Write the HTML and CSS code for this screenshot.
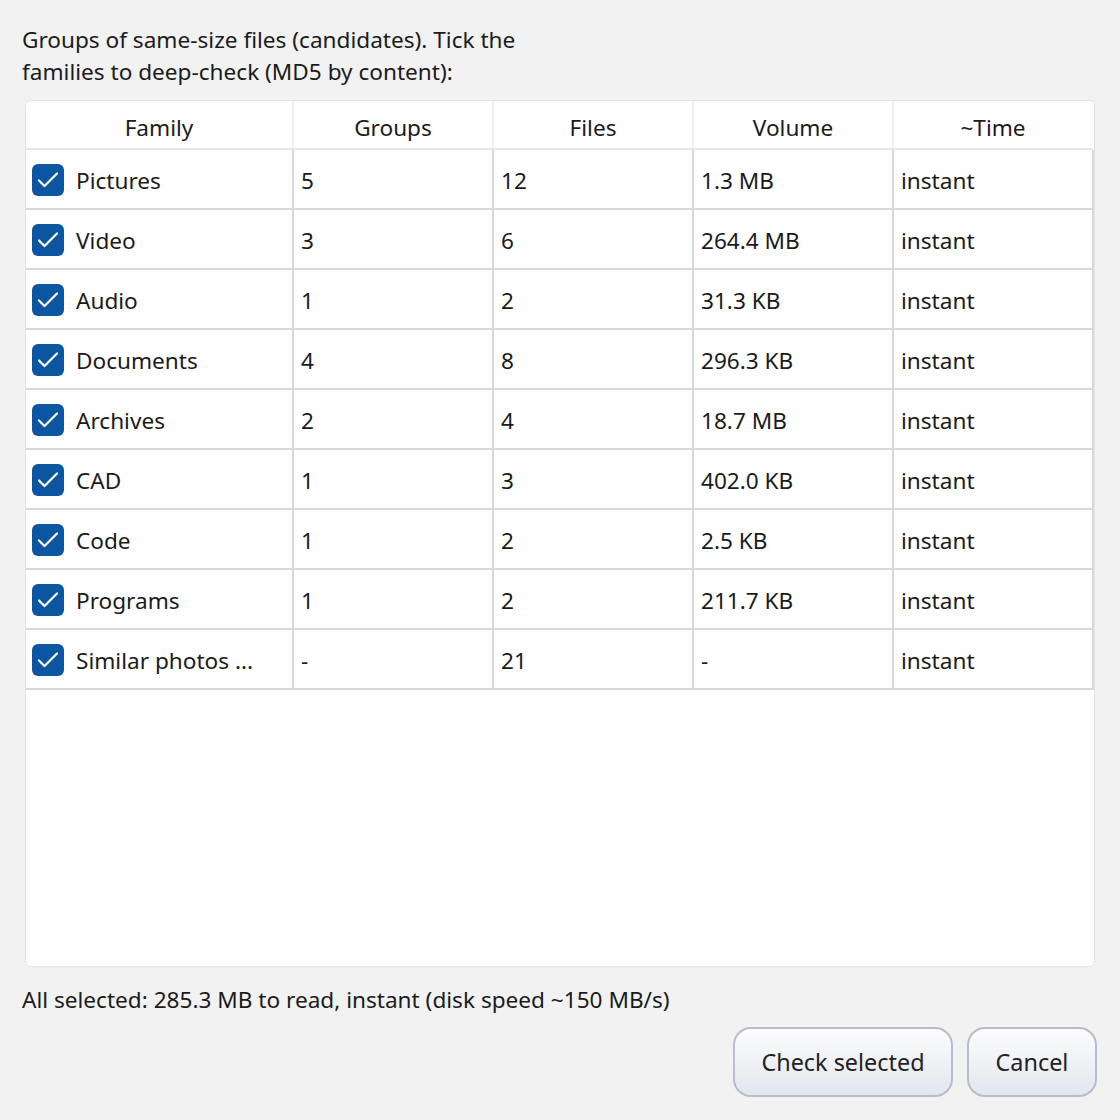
FILE: index.html
```html
<!DOCTYPE html>
<html lang="en">
<head>
    <meta charset="UTF-8">
    <title>Deep check</title>
    <link rel="stylesheet" href="styles.css">
</head>
<body>
    <div class="dialog">
        <p class="intro">Groups of same-size files (candidates). Tick the<br>families to deep-check (MD5 by content):</p>

        <div class="table-frame">
            <table class="families">
                <thead>
                    <tr>
                        <th class="col-family">Family</th>
                        <th>Groups</th>
                        <th>Files</th>
                        <th>Volume</th>
                        <th>~Time</th>
                    </tr>
                </thead>
                <tbody id="rows"></tbody>
            </table>
        </div>

        <p class="status">All selected: 285.3 MB to read, instant (disk speed ~150 MB/s)</p>

        <div class="buttons">
            <button class="btn btn-wide">Check selected</button>
            <button class="btn">Cancel</button>
        </div>
    </div>

    <script>
        const families = [
            ['Pictures', '5', '12', '1.3 MB'],
            ['Video', '3', '6', '264.4 MB'],
            ['Audio', '1', '2', '31.3 KB'],
            ['Documents', '4', '8', '296.3 KB'],
            ['Archives', '2', '4', '18.7 MB'],
            ['CAD', '1', '3', '402.0 KB'],
            ['Code', '1', '2', '2.5 KB'],
            ['Programs', '1', '2', '211.7 KB'],
            ['Similar photos ...', '-', '21', '-']
        ];

        const check = '<svg class="tick" viewBox="0 0 32 32"><polyline points="7,16.5 12.5,22 25,9.5" /></svg>';
        const tbody = document.getElementById('rows');

        families.forEach(function (f) {
            const tr = document.createElement('tr');
            tr.innerHTML =
                '<td class="col-family"><span class="box">' + check + '</span>' + f[0] + '</td>' +
                '<td>' + f[1] + '</td>' +
                '<td>' + f[2] + '</td>' +
                '<td>' + f[3] + '</td>' +
                '<td>instant</td>';
            tbody.appendChild(tr);
        });
    </script>
</body>
</html>
```

FILE: styles.css
```css
body {
    margin: 0;
    font-family: 'Noto Sans', 'Open Sans', sans-serif;
    background-color: #f2f2f2;
    color: #1b1b1b;
}
.dialog {
    display: flex;
    flex-direction: column;
    height: 1120px;
    box-sizing: border-box;
    padding: 24px 23px 23px 22px;
}
.intro {
    margin: 0;
    font-size: 22.6px;
    line-height: 32px;
}
.table-frame {
    flex: 1;
    margin: 12px 2px 0 3px;
    background-color: #fff;
    border: 1px solid #e4e4e4;
    border-radius: 6px;
    overflow: hidden;
}
.families {
    border-collapse: separate;
    border-spacing: 0;
    table-layout: fixed;
    width: 1068px;
    font-size: 22.6px;
}
.families th,
.families td {
    border-right: 2px solid #d9d9d9;
    border-bottom: 2px solid #d9d9d9;
    width: 200px;
    box-sizing: border-box;
    white-space: nowrap;
}
.families th {
    height: 49px;
    font-weight: normal;
    text-align: center;
    border-right-color: #efefef;
    border-bottom-color: #e6e6e6;
    padding: 6px 0 0;
}
.families th:last-child {
    border-right-color: #fff;
}
.families td {
    height: 60px;
    padding: 3px 0 0 7px;
    text-align: left;
}
.families .col-family {
    width: 268px;
}
.families td.col-family {
    padding-left: 6px;
}
.box {
    display: inline-block;
    width: 32px;
    height: 32px;
    border-radius: 6px;
    background-color: #0c55a1;
    vertical-align: middle;
    margin: -5px 12px 0 0;
}
.tick {
    display: block;
    width: 32px;
    height: 32px;
    fill: none;
    stroke: #fff;
    stroke-width: 2.2;
    stroke-linecap: round;
    stroke-linejoin: round;
}
.status {
    margin: 17px 0 0;
    font-size: 22.6px;
    line-height: 32px;
}
.buttons {
    display: flex;
    justify-content: flex-end;
    gap: 14px;
    margin-top: 11px;
}
.btn {
    height: 70px;
    width: 130px;
    padding: 0;
    font-family: inherit;
    font-size: 23.4px;
    color: #222;
    border: 2px solid #b9bccb;
    border-radius: 18px;
    background: linear-gradient(#fdfdfe, #e3e6ef);
}
.btn-wide {
    width: 220px;
}
```
